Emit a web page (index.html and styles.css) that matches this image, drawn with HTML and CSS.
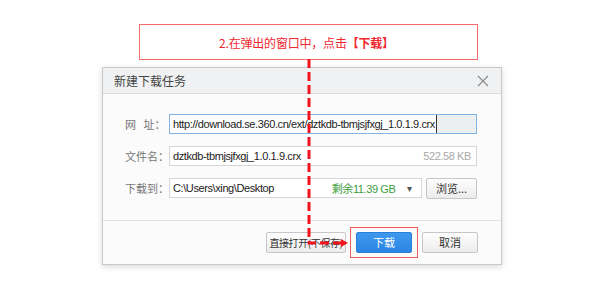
FILE: index.html
```html
<!DOCTYPE html>
<html lang="zh-CN">
<head>
<meta charset="utf-8">
<link rel="stylesheet" href="styles.css">
</head>
<body>
<div class="stage">
  <div class="callout">2.在弹出的窗口中，点击<b>【下载】</b></div>
  <div class="dialog">
    <div class="titlebar">
      <span class="title">新建下载任务</span>
      <svg class="close" width="12" height="12" viewBox="0 0 12 12"><path d="M1 1L11 11M11 1L1 11" stroke="#8a8a8a" stroke-width="1.1" fill="none"/></svg>
    </div>
    <div class="body">
      <div class="row">
        <span class="label">网&nbsp;&nbsp;&nbsp;址：</span>
        <div class="field focus"><span class="val sel">http://download.se.360.cn/ext/dztkdb-tbmjsjfxgj_1.0.1.9.crx</span></div>
      </div>
      <div class="row">
        <span class="label">文件名：</span>
        <div class="field"><span class="val">dztkdb-tbmjsjfxgj_1.0.1.9.crx</span><span class="size">522.58 KB</span></div>
      </div>
      <div class="row">
        <span class="label">下载到：</span>
        <div class="field short"><span class="val">C:\Users\xing\Desktop</span><span class="free">剩余11.39 GB</span><span class="caret">▾</span></div>
        <button class="btn browse">浏览...</button>
      </div>
    </div>
    <div class="footer">
      <button class="btn open">直接打开(不保存)</button>
      <div class="hl"><button class="btn primary">下载</button></div>
      <button class="btn cancel">取消</button>
    </div>
  </div>
  <svg class="arrow" width="600" height="300" viewBox="0 0 600 300">
    <path d="M309 59 V243 H342" stroke="#f0141e" stroke-width="3" stroke-dasharray="9 4" fill="none"/>
    <path d="M341 239 L348 243 L341 247 Z" fill="#f0141e"/>
  </svg>
</div>
</body>
</html>
```
FILE: styles.css
```css
* { box-sizing: border-box; }
html, body { margin: 0; padding: 0; background: #fff; }
body { font-family: "Liberation Sans", "Noto Sans CJK SC", sans-serif; font-size: 12px; color: #333; }
.stage { position: relative; width: 600px; height: 300px; padding-top: 24px; }
.callout {
  width: 339px; height: 36px; margin-left: 139px;
  border: 1px solid #f76a6a;
  color: #f2262e; font-size: 12px; letter-spacing: -0.2px;
  display: flex; align-items: center; justify-content: center;
  font-family: "Noto Sans CJK SC", sans-serif;
  padding-right: 4px;
}
.callout b { font-weight: 700; }
.dialog {
  width: 400px; height: 198px; margin: 7px 0 0 102px;
  border: 1px solid #c9c9c9; background: #fbfbfb;
  box-shadow: 0 2px 6px rgba(0,0,0,0.15);
  display: flex; flex-direction: column;
}
.titlebar {
  height: 26px; background: #f0f1f3; border-bottom: 1px solid #dcdcdc;
  display: flex; align-items: center; justify-content: space-between;
  padding: 0 12px 0 11px;
}
.title { font-family: "Noto Sans CJK SC", sans-serif; font-size: 12px; color: #444; }
.close { display: block; }
.body { padding: 20px 24px 0 22px; flex: 1; border-bottom: 1px solid #e2e2e2; }
.row { display: flex; align-items: center; height: 20px; margin-bottom: 12px; }
.label { width: 44px; color: #777; font-family: "Noto Sans CJK SC", sans-serif; font-size: 11px; white-space: nowrap; }
.field {
  flex: 1; height: 20px; border: 1px solid #d6d6d6; background: #fff;
  display: flex; align-items: center; padding-left: 3px; padding-right: 5px;
  font-size: 11px; letter-spacing: -0.4px; color: #222; white-space: nowrap; overflow: hidden;
}
.field.focus { border-color: #80b3e6; background: #eceef0; padding-left: 0; }
.val.sel { background: #fff; padding-left: 3px; padding-right: 1px; height: 100%; display: flex; align-items: center; border-right: 1px solid #333; }
.val { flex: none; }
.size { margin-left: auto; color: #a8a8a8; }
.field.short { flex: none; width: 253px; }
.free { margin-left: auto; color: #3c9e3c; }
.caret { margin-left: 12px; margin-right: 4px; color: #555; font-size: 10px; }
.btn {
  height: 21px; border: 1px solid #c6c6c6; border-radius: 2px;
  background: linear-gradient(#fdfdfd, #ececec);
  font-family: "Noto Sans CJK SC", sans-serif; font-size: 11px; color: #333;
  padding: 0; line-height: 19px;
}
.browse { width: 52px; margin-left: 4px; }
.footer { height: 43px; display: flex; align-items: center; justify-content: flex-end; padding-right: 23px; }
.open { width: 80px; white-space: nowrap; font-size: 10px; letter-spacing: -0.4px; text-align: center; }
.hl { width: 68px; height: 31px; border: 1px solid #f55a5a; margin: 0 4px 0 4px; display: flex; align-items: center; justify-content: center; }
.primary { width: 56px; background: linear-gradient(#3f98ee, #2a86e4); border-color: #2a7fd6; color: #fff; }
.cancel { width: 56px; }
.arrow { position: absolute; left: 0; top: 0; pointer-events: none; }
```
